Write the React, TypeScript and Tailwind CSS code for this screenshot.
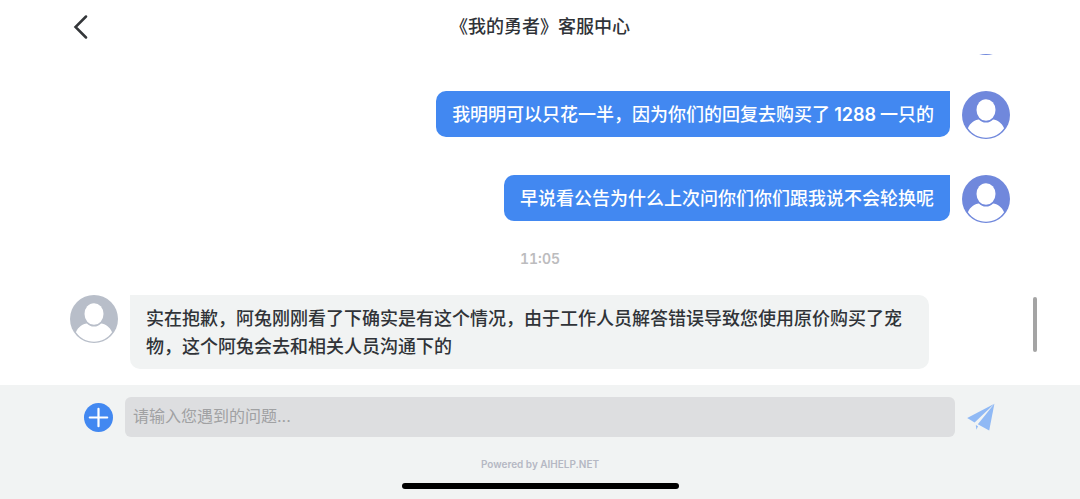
import React from 'react';

type Sender = 'user' | 'agent';

interface ChatMessage {
  sender: Sender;
  text: string;
}

const earlier: ChatMessage[] = [
  { sender: 'user', text: '我明明可以只花一半，因为你们的回复去购买了1288一只的' },
  { sender: 'user', text: '早说看公告为什么上次问你们你们跟我说不会轮换呢' },
];

const latest: ChatMessage = {
  sender: 'agent',
  text: '实在抱歉，阿兔刚刚看了下确实是有这个情况，由于工作人员解答错误导致您使用原价购买了宠物，这个阿兔会去和相关人员沟通下的',
};

function Avatar({ sender }: { sender: Sender }) {
  return (
    <svg
      viewBox="0 0 48 48"
      aria-hidden="true"
      className={`size-12 shrink-0 ${sender === 'user' ? 'text-[#7088dc]' : 'text-[#b8bec9]'}`}
    >
      <circle cx="24" cy="24" r="24" fill="currentColor" />
      <path
        d="M5.9 37.2C8.3 31.8 12.6 28.8 16.9 28.5C18.7 30.6 21.2 31.6 24 31.6S29.3 30.6 31.1 28.5C35.4 28.8 39.7 31.8 42.1 37.2C38 43.1 31.5 46.7 24 46.7S10 43.1 5.9 37.2Z"
        fill="#fff"
      />
      <ellipse cx="24" cy="19" rx="9.5" ry="10.8" fill="#fff" />
    </svg>
  );
}

function Message({ message }: { message: ChatMessage }) {
  const own = message.sender === 'user';
  return (
    <div className={`flex items-start gap-3 ${own ? 'flex-row-reverse' : ''}`}>
      <Avatar sender={message.sender} />
      <p
        className={`max-w-[85%] rounded-b-[10px] px-4 pt-[10px] pb-2 text-lg/7 font-medium ${
          own ? 'rounded-tl-[10px] bg-[#4288f1] text-white' : 'rounded-tr-[10px] bg-[#f1f3f3] text-[#303338]'
        }`}
      >
        {message.text.split(/(\d+)/).map((part, index) =>
          /^\d+$/.test(part) ? (
            <span key={index} className="mx-1 font-semibold">
              {part}
            </span>
          ) : (
            part
          ),
        )}
      </p>
    </div>
  );
}

export default function App() {
  return (
    <div className="flex h-screen flex-col overflow-hidden bg-white font-['Inter','Noto_Sans_CJK_SC',sans-serif]">
      <header className="grid h-[54px] shrink-0 grid-cols-[1fr_auto_1fr] items-center px-[70px]">
        <button type="button" aria-label="返回" className="flex size-6 items-center text-[#333639]">
          <svg viewBox="0 0 24 24" className="size-6" fill="none" stroke="currentColor" strokeWidth="2.5" strokeLinecap="round">
            <path d="M16 1.5L5.5 12L16 22.5" />
          </svg>
        </button>
        <h1 className="text-lg/7 font-medium text-[#303338]">《我的勇者》客服中心</h1>
      </header>

      <main className="relative flex min-h-0 flex-1 flex-col justify-end overflow-hidden px-[70px] pb-4">
        <div className="flex flex-col gap-9">
          <div className="flex flex-row-reverse">
            <Avatar sender="user" />
          </div>
          {earlier.map((message) => (
            <Message key={message.text} message={message} />
          ))}
        </div>
        <time className="my-[26px] text-center text-sm/5 font-semibold text-[#bcbcbe] tabular-nums">11:05</time>
        <Message message={latest} />
        <div className="absolute right-[43px] bottom-[33px] h-[55px] w-1 rounded-full bg-[#a4a4a4]" />
      </main>

      <footer className="shrink-0 bg-[#f1f3f3] pt-3">
        <form className="flex items-center gap-3 px-[84px]" onSubmit={(event) => event.preventDefault()}>
          <button type="button" aria-label="添加附件" className="shrink-0">
            <svg viewBox="0 0 29 29" className="size-[29px]">
              <circle cx="14.5" cy="14.5" r="14.5" fill="#4288f1" />
              <path d="M14.5 5.8V23.2M5.8 14.5H23.2" fill="none" stroke="#fff" strokeWidth="2.2" strokeLinecap="round" />
            </svg>
          </button>
          <input
            type="text"
            aria-label="请输入您遇到的问题"
            placeholder="请输入您遇到的问题..."
            className="h-10 min-w-0 flex-1 rounded-md bg-[#dddee0] px-2 pb-[2px] text-base text-[#303338] outline-none placeholder:text-[#a0a1a3]"
          />
          <button type="submit" aria-label="发送" className="shrink-0">
            <svg viewBox="0 0 29 29" className="size-[29px]" fill="#90b9f5">
              <path d="M27.4 .8L.2 15L7.6 19.4Z" />
              <path d="M27.4 .8L22.2 27.4L10.8 21.3Z" />
              <path d="M8.8 21.9L11 23.2L9.4 26.8Z" />
            </svg>
          </button>
        </form>
        <p className="mt-[19px] text-center text-[10px]/4 font-semibold text-[#b5b8c3]">Powered by AIHELP.NET</p>
        <div className="mx-auto mt-[11px] mb-[10px] h-[6px] w-[277px] rounded-full bg-black" />
      </footer>
    </div>
  );
}
